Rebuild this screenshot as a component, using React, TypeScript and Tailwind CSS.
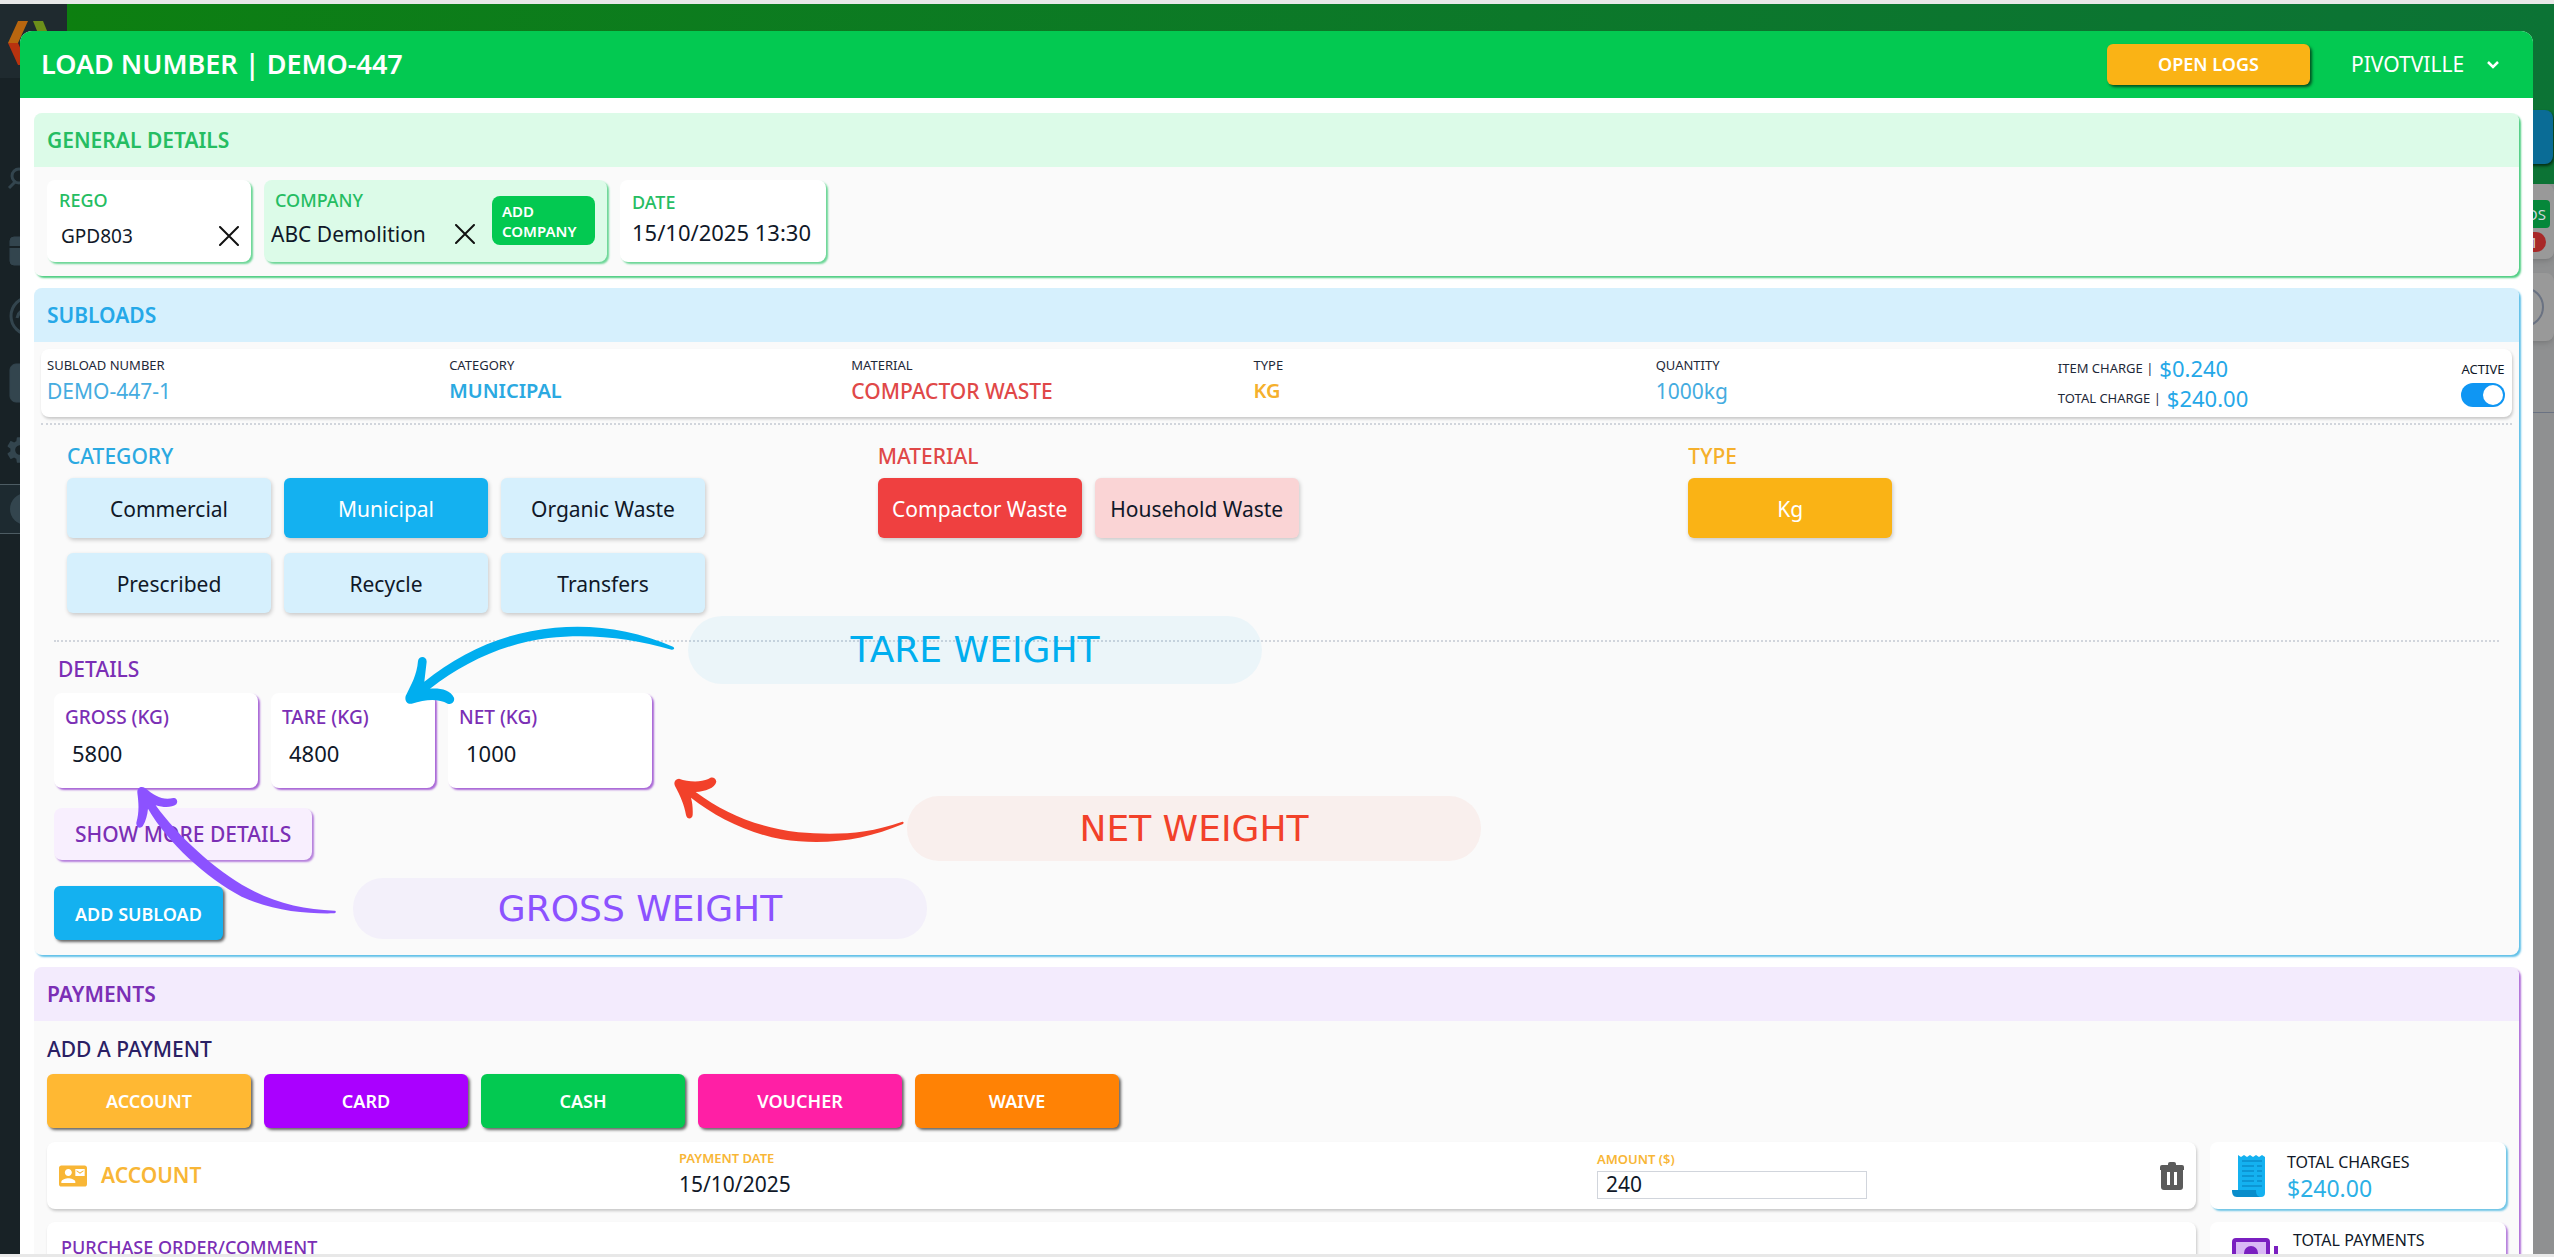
import React, { useState } from "react";
import clsx from "clsx";
import { MdContactMail, MdSettings } from "react-icons/md";

interface ChoiceGroup {
  title: string;
  titleClass: string;
  idleClass: string;
  activeClass: string;
  options: string[];
  initial: string;
}

const choiceGroups: ChoiceGroup[] = [
  {
    title: "CATEGORY",
    titleClass: "text-[#2ba9e1]",
    idleClass: "bg-[#d6f0fd] text-gray-900",
    activeClass: "bg-[#14b1f0] text-white",
    options: [
      "Commercial",
      "Municipal",
      "Organic Waste",
      "Prescribed",
      "Recycle",
      "Transfers",
    ],
    initial: "Municipal",
  },
  {
    title: "MATERIAL",
    titleClass: "text-[#e04848]",
    idleClass: "bg-[#fad4d5] text-gray-900",
    activeClass: "bg-[#ef4040] text-white",
    options: ["Compactor Waste", "Household Waste"],
    initial: "Compactor Waste",
  },
  {
    title: "TYPE",
    titleClass: "text-[#f5b02c]",
    idleClass: "bg-[#fdebc4] text-gray-900",
    activeClass: "bg-[#fab315] text-white",
    options: ["Kg"],
    initial: "Kg",
  },
];

const summary = [
  { label: "SUBLOAD NUMBER", value: "DEMO-447-1", className: "text-[21px] text-[#45ace0]" },
  { label: "CATEGORY", value: "MUNICIPAL", className: "text-[20px] font-semibold text-[#2ba9e1]" },
  { label: "MATERIAL", value: "COMPACTOR WASTE", className: "text-[21px] font-medium text-[#e04848]" },
  { label: "TYPE", value: "KG", className: "text-[20px] font-semibold text-[#f5b02c]" },
  { label: "QUANTITY", value: "1000kg", className: "text-[21px] text-[#45ace0]" },
];

const paymentTypes = [
  { name: "ACCOUNT", className: "bg-[#ffb833]" },
  { name: "CARD", className: "bg-[#aa00ff]" },
  { name: "CASH", className: "bg-[#03c951]" },
  { name: "VOUCHER", className: "bg-[#ff1fa5]" },
  { name: "WAIVE", className: "bg-[#ff8205]" },
];

const weights = [
  { id: "gross", label: "GROSS (KG)", value: "5800", width: "w-[204px]" },
  { id: "tare", label: "TARE (KG)", value: "4800", width: "w-[164px]" },
  { id: "net", label: "NET (KG)", value: "1000", width: "w-[204px]" },
];

const CrossIcon = () => (
  <svg viewBox="0 0 20 20" className="size-5" stroke="#111" strokeWidth="2" strokeLinecap="round">
    <path d="M1 1 19 19M19 1 1 19" />
  </svg>
);

const TrashIcon = () => (
  <svg viewBox="0 0 24 28" className="h-7 w-6">
    <path
      fill="#5b5b5b"
      d="M8 3V2a2 2 0 0 1 2-2h4a2 2 0 0 1 2 2v1h6a2 2 0 0 1 2 2v3H0V5a2 2 0 0 1 2-2ZM1 8h22v17a3 3 0 0 1-3 3H4a3 3 0 0 1-3-3Z"
    />
    <path fill="#fff" d="M7 10h3v13H7zM14 10h3v13h-3z" />
  </svg>
);

const ReceiptIcon = () => (
  <svg viewBox="0 0 34 44" className="h-11 w-[34px]">
    <path
      fill="#14b1f0"
      d="M6 1l3 2 3-2 3 2 3-2 3 2 3-2 3 2 3-2 3 2v36a4 4 0 0 1-4 4H8L6 36Z"
    />
    <path fill="#0a8dcb" d="M0 36h24c0 4 1 6 4 7H5c-4 0-5-3-5-7Z" />
    <path
      stroke="#0a8dcb"
      strokeWidth="1.5"
      d="M10 7h20M10 12h12M25 12h5M10 17h12M25 17h5M10 22h12M25 22h5M10 27h12M25 27h5M10 32h20"
    />
  </svg>
);

const CashIcon = () => (
  <svg viewBox="0 0 46 36" className="h-9 w-[46px]">
    <rect x="2" y="2" width="34" height="28" rx="2" fill="#d9b8f5" stroke="#7a1fc0" strokeWidth="4" />
    <circle cx="19" cy="15" r="7" fill="#7a1fc0" />
    <path stroke="#7a1fc0" strokeWidth="4" d="M44 8v26" />
  </svg>
);

const Section = ({
  title,
  headClass,
  className,
  children,
}: {
  title: string;
  headClass: string;
  className: string;
  children: React.ReactNode;
}) => (
  <section className={clsx("relative rounded-lg bg-[#fafafa]", className)}>
    <h2
      className={clsx(
        "flex h-[54px] items-center rounded-t-lg px-[13px] pt-0.5 text-[21px] font-semibold",
        headClass
      )}
    >
      {title}
    </h2>
    {children}
  </section>
);

const Choices = ({ group }: { group: ChoiceGroup }) => {
  const [selected, setSelected] = useState(group.initial);

  return (
    <div>
      <h3 className={clsx("text-[21px] leading-7 font-medium", group.titleClass)}>
        {group.title}
      </h3>
      <div className="mt-2 flex max-w-[640px] flex-wrap gap-x-[13px] gap-y-[15px]">
        {group.options.map((option) => (
          <button
            key={option}
            onClick={() => setSelected(option)}
            className={clsx(
              "h-[60px] w-[204px] rounded-md pt-1 text-[21px] whitespace-nowrap shadow-[1px_2px_4px_rgba(0,0,0,0.2)]",
              option === selected ? group.activeClass : group.idleClass
            )}
          >
            {option}
          </button>
        ))}
      </div>
    </div>
  );
};

// Labelled arrows lying over the weight fields
const WeightNotes = () => (
  <div className="pointer-events-none font-['DejaVu_Sans',sans-serif] text-[36px]">
    <p className="absolute top-[328px] left-[654px] flex h-[68px] w-[574px] items-center justify-center rounded-[34px] bg-[#00aeef]/6 text-[#00aeef]">
      TARE WEIGHT
    </p>
    <p className="absolute top-[508px] left-[873px] flex h-[65px] w-[574px] items-center justify-center rounded-[32px] bg-[#f2412a]/6 text-[#f2412a]">
      NET WEIGHT
    </p>
    <p className="absolute top-[590px] left-[319px] flex h-[61px] w-[574px] items-center justify-center rounded-[30px] bg-[#8c52ff]/6 text-[#8c52ff]">
      GROSS WEIGHT
    </p>
    <svg viewBox="0 0 870 330" className="absolute top-[322px] left-[361px] w-[290px]">
      <path
        fill="#00aeef"
        d="M834 110C720 60 600 42 480 53C330 67 200 125 88 215L95 155C95 137 71 137 69 153C66 195 48 225 32 258C28 274 38 284 50 281C90 268 130 264 158 281C170 286 180 275 177 263C165 240 138 234 105 236C210 155 330 100 460 84C590 70 710 85 830 119C838 120 840 113 834 110Z"
      />
    </svg>
    <svg viewBox="0 0 750 270" className="absolute top-[482px] left-[631px] w-[250px]">
      <path
        fill="#f2412a"
        d="M710 156C600 195 500 195 400 187C270 170 180 130 92 66C120 63 150 55 154 35C152 20 137 20 130 27C105 38 70 36 42 26C30 26 25 38 30 48C45 75 58 105 63 135C66 150 82 148 83 135C84 115 82 98 78 83C150 140 250 190 350 208C480 228 600 210 714 162C718 157 715 154 710 156Z"
      />
    </svg>
    <svg viewBox="0 0 660 435" className="absolute top-[492px] left-[91px] w-[220px]">
      <path
        fill="#8c52ff"
        d="M628 392C540 390 450 370 370 325C270 270 160 170 92 76C115 83 140 84 154 73C161 62 153 52 145 54C112 62 90 48 60 24C48 16 36 24 37 38C42 75 42 100 34 128C33 143 46 147 53 139C63 122 67 105 69 86C130 190 240 290 350 350C440 392 540 402 628 400C634 398 634 392 628 392Z"
      />
    </svg>
  </div>
);

const GeneralDetails = () => (
  <Section
    title="GENERAL DETAILS"
    headClass="bg-[#dcfbe8] text-[#25bd62]"
    className="shadow-[2px_2px_2px_#4fce83]"
  >
    <div className="flex gap-[13px] px-[13px] pt-[13px] pb-[14px]">
      <div className="h-[82px] w-[204px] rounded-lg bg-white px-3 pt-1 shadow-[2px_2px_2px_#6bd696]">
        <label htmlFor="rego" className="block text-[18px] leading-8 font-medium text-[#25bd62]">
          REGO
        </label>
        <div className="flex items-center justify-between">
          <input id="rego" defaultValue="GPD803" className="h-10 w-32 pl-0.5 text-[19px] outline-none" />
          <button aria-label="Clear rego">
            <CrossIcon />
          </button>
        </div>
      </div>

      <div className="flex h-[82px] w-[343px] justify-between rounded-lg bg-[#dcfbe8] pt-1 pr-3 pl-[7px] shadow-[2px_2px_2px_#6bd696]">
        <div>
          <label htmlFor="company" className="block pl-1 text-[18px] leading-8 font-medium text-[#25bd62]">
            COMPANY
          </label>
          <div className="flex items-center">
            <input id="company" defaultValue="ABC Demolition" className="h-9 w-[184px] text-[21px] outline-none" />
            <button aria-label="Clear company">
              <CrossIcon />
            </button>
          </div>
        </div>
        <button className="mt-3 h-[49px] w-[103px] rounded-lg bg-[#03c951] px-2.5 text-left text-[15px] leading-5 font-semibold text-white">
          ADD COMPANY
        </button>
      </div>

      <div className="h-[82px] w-[206px] rounded-lg bg-white px-3 pt-2 shadow-[2px_2px_2px_#6bd696]">
        <label htmlFor="date" className="block text-[18px] leading-7 font-medium text-[#25bd62]">
          DATE
        </label>
        <input id="date" defaultValue="15/10/2025 13:30" className="w-full text-[22px] outline-none" />
      </div>
    </div>
  </Section>
);

const Subloads = () => {
  const [active, setActive] = useState(true);

  return (
    <Section
      title="SUBLOADS"
      headClass="bg-[#d6f0fd] text-[#25a8e8]"
      className="shadow-[2px_2px_2px_#5fc0e8]"
    >
      <div className="mx-[7px] mt-[7px] flex h-[68px] rounded-lg bg-white px-1.5 shadow-[1px_2px_3px_rgba(0,0,0,0.2)]">
        <dl className="grid flex-1 grid-cols-6">
          {summary.map((item) => (
            <div key={item.label} className="pt-1.5">
              <dt className="text-[13px] leading-5 text-gray-800">{item.label}</dt>
              <dd className={clsx("leading-8", item.className)}>{item.value}</dd>
            </div>
          ))}
          <div className="pt-1">
            <div className="flex items-center gap-1.5 leading-[30px]">
              <dt className="text-[13px] text-gray-800">ITEM CHARGE |</dt>
              <dd className="text-[22px] text-[#25a8e8]">$0.240</dd>
            </div>
            <div className="flex items-center gap-1.5 leading-[30px]">
              <dt className="text-[13px] text-gray-800">TOTAL CHARGE |</dt>
              <dd className="text-[22px] text-[#25a8e8]">$240.00</dd>
            </div>
          </div>
        </dl>
        <label className="flex w-[46px] flex-col items-center pt-2.5 text-[13px] leading-5">
          ACTIVE
          <input
            type="checkbox"
            checked={active}
            onChange={() => setActive(!active)}
            className="peer sr-only"
          />
          <span className="mt-1 flex h-6 w-11 items-center rounded-full bg-gray-300 p-0.5 peer-checked:justify-end peer-checked:bg-[#0f96f3]">
            <span className="size-5 rounded-full bg-white" />
          </span>
        </label>
      </div>

      <div className="mx-[7px] mt-1.5 border-t-2 border-dotted border-gray-300" />
      <div className="grid grid-cols-3 pt-[17px] pr-5 pl-[33px]">
        {choiceGroups.map((group) => (
          <Choices key={group.title} group={group} />
        ))}
      </div>

      <div className="mx-5 mt-[27px] border-t-2 border-dotted border-gray-300" />
      <div className="px-5 pt-[13px] pb-[15px]">
        <h3 className="px-1 text-[21px] leading-7 font-medium text-[#7b2fb5]">DETAILS</h3>
        <div className="mt-2.5 flex gap-[13px]">
          {weights.map((field) => (
            <div
              key={field.id}
              className={clsx(
                "h-[95px] rounded-lg bg-white px-[11px] pt-2.5 shadow-[2px_2px_2px_#a866d6]",
                field.width
              )}
            >
              <label htmlFor={field.id} className="block text-[19px] leading-7 font-medium text-[#7b2fb5]">
                {field.label}
              </label>
              <input
                id={field.id}
                defaultValue={field.value}
                className="mt-1 h-9 w-full pl-[7px] text-[22px] outline-none"
              />
            </div>
          ))}
        </div>
        <button className="mt-5 block h-[52px] rounded-lg bg-[#f8effe] px-[21px] pt-0.5 text-[21px] font-medium text-[#7b2fb5] shadow-[2px_2px_2px_#b57fdc]">
          SHOW MORE DETAILS
        </button>
        <button className="mt-[26px] block h-[54px] rounded-md bg-[#14b1f0] px-[21px] pt-0.5 text-[18px] font-semibold text-white shadow-[2px_2px_3px_rgba(0,0,0,0.6)]">
          ADD SUBLOAD
        </button>
      </div>
      <WeightNotes />
    </Section>
  );
};

const Payments = () => (
  <Section
    title="PAYMENTS"
    headClass="bg-[#f3ebfd] text-[#7b2fb5]"
    className="shadow-[2px_2px_2px_#b06fd8]"
  >
    <div className="px-[13px] pt-[14px]">
      <h3 className="text-[21px] leading-7 font-medium text-[#2a2064]">ADD A PAYMENT</h3>
      <div className="mt-[11px] flex gap-[13px]">
        {paymentTypes.map((type) => (
          <button
            key={type.name}
            className={clsx(
              "h-[54px] w-[204px] rounded-md text-[18px] font-semibold text-white shadow-[2px_2px_3px_rgba(0,0,0,0.6)]",
              type.className
            )}
          >
            {type.name}
          </button>
        ))}
      </div>

      <div className="mt-[14px] flex gap-[14px]">
        <div className="flex min-w-0 flex-1 flex-col gap-[13px]">
          <div className="grid h-[67px] grid-cols-[620fr_918fr_587fr] items-center rounded-lg bg-white px-3 shadow-[1px_2px_3px_rgba(0,0,0,0.2)]">
            <div className="flex items-center gap-3.5 text-[#f8b636]">
              <MdContactMail className="size-7" />
              <span className="text-[21px] font-semibold">ACCOUNT</span>
            </div>
            <div className="pb-1">
              <p className="text-[13px] leading-5 font-semibold text-[#f8b636]">PAYMENT DATE</p>
              <p className="text-[21px] leading-8">15/10/2025</p>
            </div>
            <div className="flex items-center justify-between">
              <div className="pb-1.5">
                <label htmlFor="amount" className="block text-[13px] leading-6 font-semibold text-[#f8b636]">
                  AMOUNT ($)
                </label>
                <input
                  id="amount"
                  defaultValue="240"
                  className="block h-7 w-[270px] border border-gray-300 px-2 text-[21px] outline-none"
                />
              </div>
              <button aria-label="Delete payment">
                <TrashIcon />
              </button>
            </div>
          </div>
          <div className="h-32 rounded-lg bg-white px-3.5 pt-[11px] shadow-[1px_2px_3px_rgba(0,0,0,0.2)]">
            <label htmlFor="comment" className="block text-[18px] leading-7 font-medium text-[#7b2fb5]">
              PURCHASE ORDER/COMMENT
            </label>
            <input id="comment" className="block w-full" />
          </div>
        </div>

        <div className="flex w-[296px] flex-col gap-[13px]">
          <div className="flex h-[67px] items-center gap-[21px] rounded-lg bg-white pl-[22px] shadow-[2px_2px_2px_#6fc5e6]">
            <ReceiptIcon />
            <div>
              <p className="text-[16px] leading-6 text-gray-900">TOTAL CHARGES</p>
              <p className="text-[23px] leading-7 text-[#2cb0e6]">$240.00</p>
            </div>
          </div>
          <div className="flex h-[67px] items-start gap-[15px] rounded-lg bg-white pl-[22px] shadow-[2px_2px_2px_#b57fdc]">
            <div className="pt-4">
              <CashIcon />
            </div>
            <div className="pt-1.5">
              <p className="text-[16px] leading-6 text-gray-900">TOTAL PAYMENTS</p>
              <p className="text-[23px] leading-7 text-[#7b2fb5]">$240.00</p>
            </div>
          </div>
        </div>
      </div>
    </div>
  </Section>
);

// The dimmed page behind the dialog, only its edges can be seen
const Backdrop = () => (
  <div className="flex h-full">
    <aside className="w-[67px] bg-[#182226] text-[#33454e]">
      <div className="h-[74px] bg-[#1f2a2f] pt-[17px] pl-2">
        <svg viewBox="0 0 44 44" className="size-11">
          <path fill="#b8660f" d="M10 0h10L10 22H0Z" />
          <path fill="#b8330f" d="M0 22h10l10 22H10Z" />
          <path fill="#6c8f1a" d="M25 0h10l9 22H34Z" />
        </svg>
      </div>
      <svg viewBox="0 0 40 400" className="mt-[84px] h-[400px] w-10" fill="none" stroke="currentColor">
        <circle cx="19" cy="14" r="7" strokeWidth="3" />
        <path strokeWidth="3" d="M9 26l7-7" />
        <rect x="10" y="75" width="28" height="28" rx="4" fill="currentColor" />
        <path stroke="#182226" strokeWidth="2" d="M8 85h30" />
        <circle cx="30" cy="154" r="19" strokeWidth="3" />
        <path strokeWidth="3" d="M17 156c2-8 8-10 13-10" />
        <rect x="10" y="202" width="28" height="38" rx="6" fill="currentColor" />
      </svg>
    </aside>
    <div className="flex flex-1 flex-col items-end bg-[#8f9091]">
      <div className="flex h-[180px] w-full justify-end bg-linear-to-r from-[#0d7f10] to-[#0c7335] pt-[106px]">
        <div className="mr-px h-[54px] w-40 rounded-lg bg-[#0a6c96] shadow-[1px_2px_3px_rgba(0,0,0,0.6)]" />
      </div>
      <div className="flex h-[75px] w-60 flex-col items-end rounded-lg bg-[#999] pt-4 pr-1 text-[15px] leading-7 text-gray-300 shadow-md">
        <span className="rounded bg-[#05873a] px-1">LOADS</span>
        <span className="mt-1 mr-1 flex h-5 w-7 items-center justify-end rounded-full bg-[#a82828] pr-2">1</span>
      </div>
      <div className="mt-[14px] flex h-[68px] w-60 items-center justify-end rounded-lg bg-[#999] pr-[10px] shadow-md">
        <span className="size-10 rounded-full border-2 border-gray-500" />
      </div>
      <div className="mt-[71px] h-px w-full bg-gray-500" />
    </div>
  </div>
);

const App = () => (
  <div className="flex h-screen flex-col overflow-hidden bg-[#e8e8e8] pt-1 pb-[3px] font-['Noto_Sans',sans-serif] text-gray-900">
    <div className="relative min-h-0 flex-1 overflow-hidden">
      <Backdrop />
      <div className="absolute top-[480px] left-0 flex h-[50px] w-5 items-center border-y border-[#4d5c63] bg-[#1d2a30]">
        <span className="ml-2.5 h-8 w-8 shrink-0 rounded-full bg-[#33454e]" />
      </div>
      <MdSettings className="absolute top-[430px] left-1 size-8 text-[#33454e]" />

      <div role="dialog" className="absolute inset-x-0 top-[27px] bottom-0 mr-[21px] ml-5 overflow-hidden rounded-t-xl bg-white">
        <header className="flex h-[67px] items-center justify-between bg-[#03c951] pr-[34px] pl-[21px] text-white">
          <h1 className="text-[27px] font-semibold">LOAD NUMBER | DEMO-447</h1>
          <div className="flex items-center gap-[41px]">
            <button className="h-[41px] w-[203px] rounded-md bg-[#fab315] text-[18px] font-semibold shadow-[2px_2px_3px_rgba(0,0,0,0.6)]">
              OPEN LOGS
            </button>
            <div className="relative">
              <select
                aria-label="Site"
                className="w-[148px] appearance-none bg-transparent text-[21px] outline-none"
              >
                <option>PIVOTVILLE</option>
              </select>
              <svg
                viewBox="0 0 12 8"
                className="pointer-events-none absolute top-3 right-0 w-3"
                fill="none"
                stroke="white"
                strokeWidth="2.5"
              >
                <path d="M1 1l5 5 5-5" />
              </svg>
            </div>
          </div>
        </header>
        <div className="flex flex-col gap-3 pt-[15px] pr-[14px] pl-3.5">
          <GeneralDetails />
          <Subloads />
          <Payments />
        </div>
      </div>
    </div>
  </div>
);

export default App;
